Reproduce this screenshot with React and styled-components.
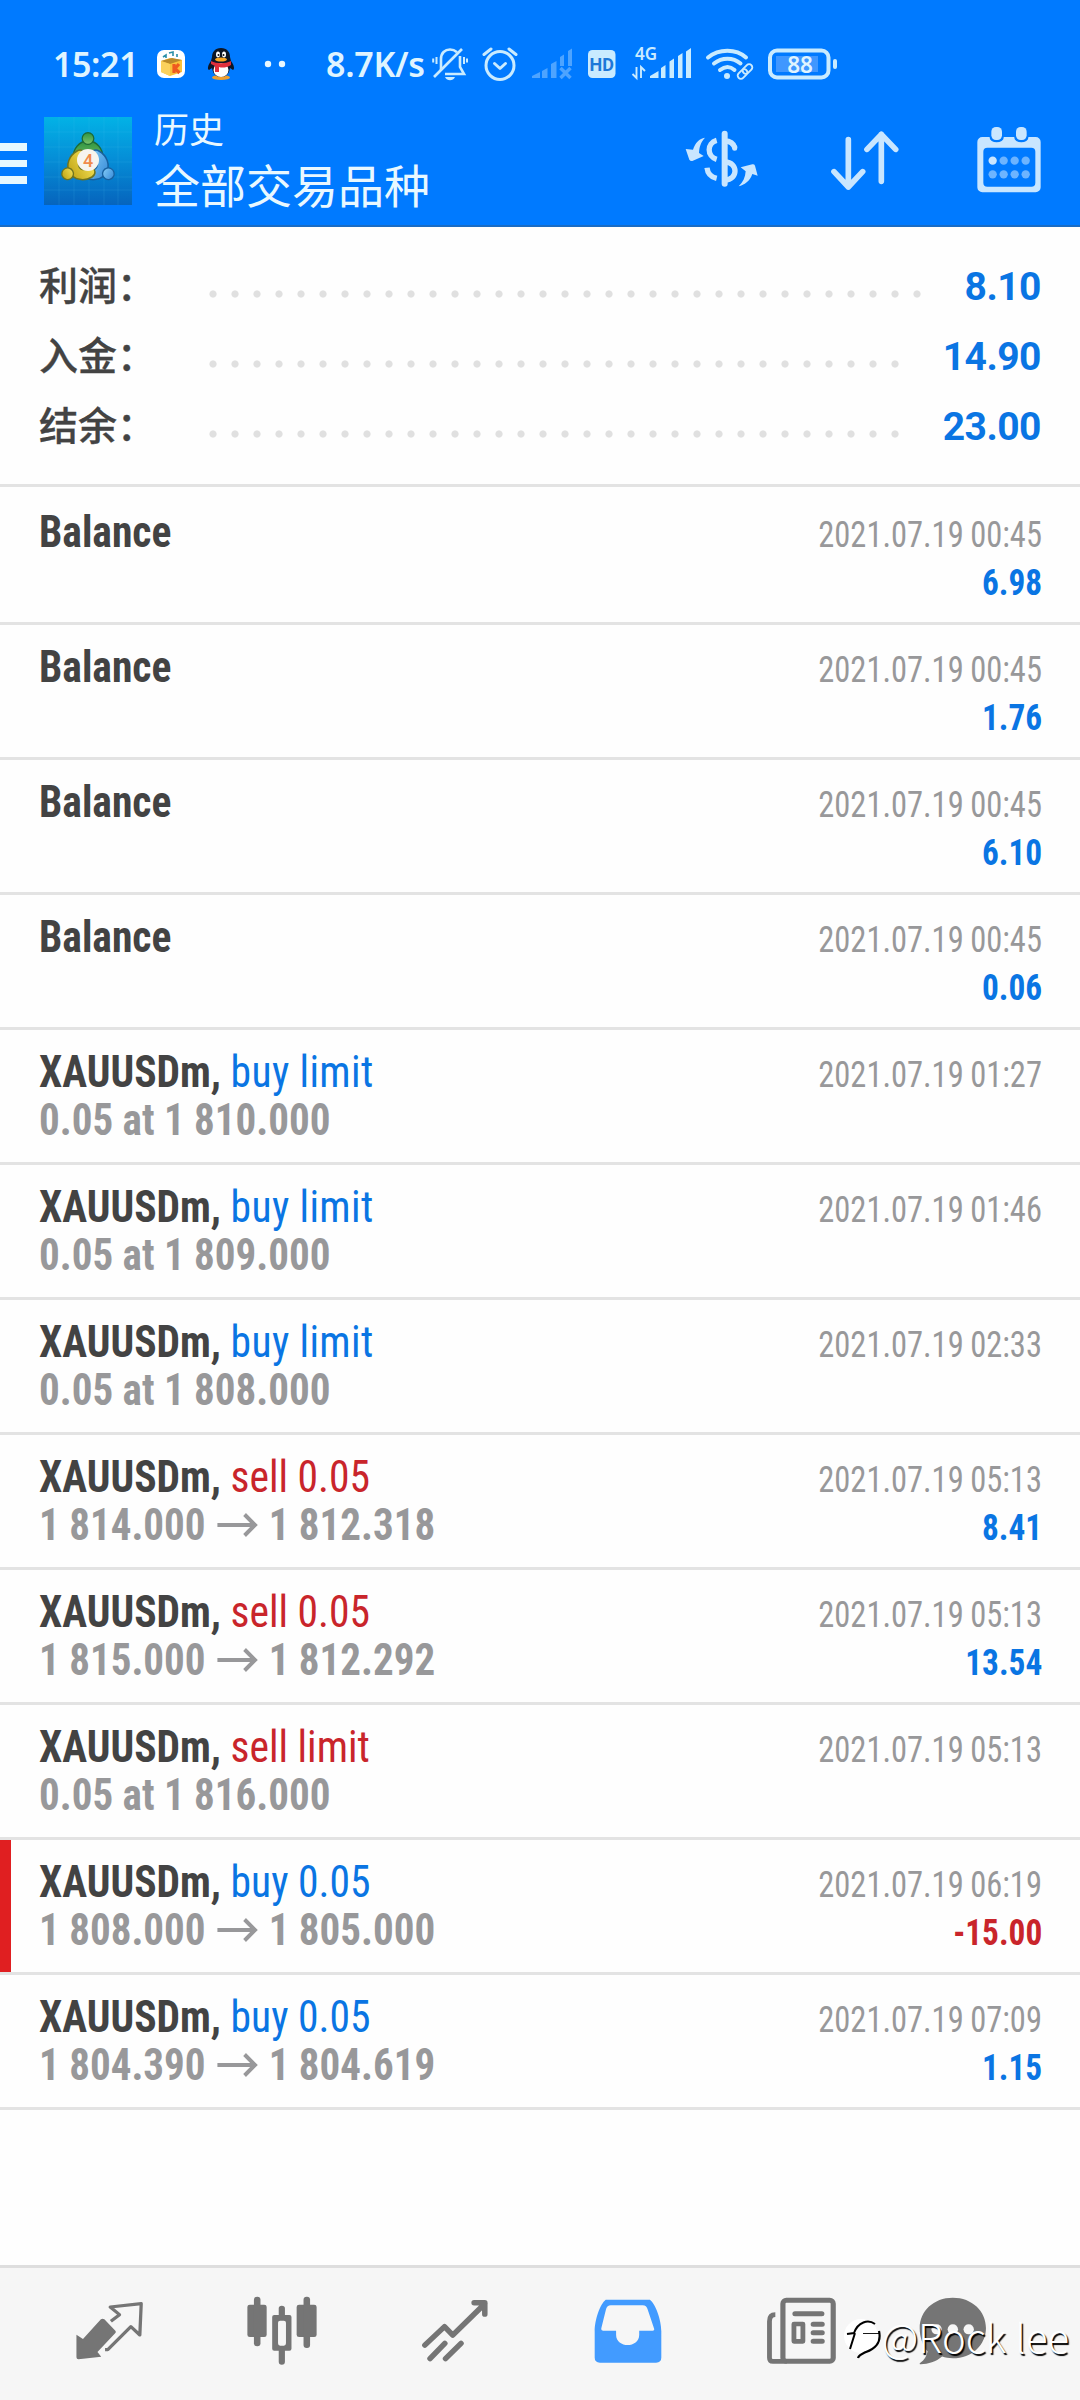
import React from "react";
import styled, { createGlobalStyle, css } from "styled-components";

const BLUE = "#007aff";
const LINK = "#0a75e3";
const RED = "#c9252b";
const INK = "#434343";
const GREY = "#98989a";
const ICE = "#c9ebff";

const GlobalStyle = createGlobalStyle`
  * { box-sizing: border-box; }
  body { margin: 0; background: #fff; }
`;

const condensed = css`
  font-family: Roboto, "Liberation Sans", sans-serif;
  font-stretch: 75%;
  white-space: pre;
`;

const Screen = styled.div`
  width: 1080px;
  height: 2400px;
  display: flex;
  flex-direction: column;
  overflow: hidden;
  background: #fefefe;
  font-family: Roboto, "Noto Sans CJK SC", sans-serif;
`;

/* ---------- header ---------- */

const Header = styled.header`
  height: 227px;
  flex: none;
  background: ${BLUE};
  border-bottom: 2px solid #1a6cc4;
`;

const StatusBar = styled.div`
  height: 100px;
  padding: 40px 0 0 53px;
  display: flex;
  align-items: flex-start;
`;

const StatusText = styled.span`
  flex: none;
  width: ${(p) => p.$w}px;
  margin-left: ${(p) => p.$gap || 0}px;
  font: 600 34px/48px "Noto Sans", sans-serif;
  letter-spacing: ${(p) => p.$track}px;
  color: #dff4ff;
  white-space: nowrap;
`;

const StatusIcon = styled.svg`
  flex: none;
  display: block;
  margin-left: ${(p) => p.$gap}px;
  overflow: visible;
`;

const Toolbar = styled.div`
  height: 125px;
  display: flex;
  align-items: flex-start;
`;

const MenuButton = styled.div`
  width: 27px;
  margin-top: 43px;
  display: flex;
  flex-direction: column;
  gap: 9px;
`;

const MenuBar = styled.i`
  height: 7.5px;
  background: #e6f8ff;
`;

const AppLogo = styled.svg`
  display: block;
  margin: 17px 0 0 17px;
`;

const Titles = styled.div`
  width: 520px;
  margin-left: 22px;
  display: flex;
  flex-direction: column;
  font-family: "Noto Sans CJK SC", sans-serif;
  font-weight: 400;
  color: #e9f8ff;
`;

const Title = styled.div`
  font-size: 35px;
  line-height: 56px;
  margin-top: 0;
`;

const Subtitle = styled.div`
  font-size: 46px;
  line-height: 56px;
  margin-top: -1px;
`;

const ToolIcon = styled.svg`
  display: block;
  flex: none;
  margin-top: 25px;
  margin-left: ${(p) => p.$gap}px;
`;

/* ---------- summary ---------- */

const Summary = styled.section`
  flex: none;
  height: 260px;
  padding: 23px 39px 0 39px;
  border-bottom: 3px solid #e3e3e3;
`;

const SummaryRow = styled.div`
  height: 70px;
  display: flex;
  align-items: center;
`;

const SummaryLabel = styled.span`
  width: 169px;
  flex: none;
  margin-top: -4px;
  font: 500 39px/70px "Noto Sans CJK SC", sans-serif;
  -webkit-text-stroke: 0.3px ${INK};
  color: ${INK};
  white-space: nowrap;
`;

const Leader = styled.span`
  flex: none;
  width: ${(p) => p.$dots * 22}px;
  height: 10px;
  margin: 17px auto 0 -6px;
  background: radial-gradient(circle at 11px 5px, #e0e0e0 3.2px, transparent 4px) 0 0 / 22px 10px repeat-x;
`;

const SummaryValue = styled.span`
  margin-top: 3px;
  font: 700 39px/70px Roboto, sans-serif;
  letter-spacing: -0.5px;
  color: ${LINK};
`;

/* ---------- deals ---------- */

const List = styled.main`
  flex: 1;
  padding-top: 3px;
`;

const Deal = styled.article`
  height: 135px;
  display: flex;
  justify-content: space-between;
  padding: 15px 38px 0 39px;
  border-bottom: 3px solid #e3e3e3;
  background: ${(p) => (p.$loss ? "linear-gradient(#e01f21, #e01f21) 0 0 / 11px 100% no-repeat" : "none")};
`;

const Side = styled.div`
  display: flex;
  flex-direction: column;
  align-items: ${(p) => (p.$end ? "flex-end" : "flex-start")};
`;

const Line = styled.div`
  ${condensed}
  height: 48px;
  line-height: 56px;
  font-size: 43.5px;
  font-weight: 700;
  color: ${(p) => (p.$dim ? GREY : INK)};
  display: flex;
  transform: scaleX(${(p) => (p.$dim ? 0.943 : 0.955)});
  transform-origin: left;
`;

const Kind = styled.span`
  font-weight: 400;
  letter-spacing: ${(p) => (p.$limit ? 0.4 : 0)}px;
  color: ${(p) => (p.$sell ? RED : LINK)};
`;

const Time = styled.div`
  ${condensed}
  height: 48px;
  line-height: 60px;
  font-size: 36px;
  word-spacing: -1px;
  color: ${GREY};
  transform: scaleX(0.902);
  transform-origin: right;
`;

const Profit = styled.div`
  ${condensed}
  height: 48px;
  line-height: 60px;
  font-size: 36px;
  font-weight: 700;
  color: ${(p) => (p.$loss ? RED : LINK)};
  transform: scaleX(0.925);
  transform-origin: right;
`;

const Arrow = styled.svg`
  display: block;
  margin: 14px 11px 0 12px;
`;

/* ---------- bottom navigation ---------- */

const NavBar = styled.nav`
  flex: none;
  position: relative;
  height: 135px;
  padding-left: 22px;
  display: flex;
  border-top: 3px solid #dedede;
  background: #f6f6f6;
`;

const NavItem = styled.div`
  width: ${(p) => p.$w || 173}px;
  height: 126px;
  display: flex;
  justify-content: center;
  align-items: center;
`;

const Watermark = styled.div`
  position: absolute;
  right: 11px;
  top: 38px;
  display: flex;
  align-items: center;
  font: 300 40px/60px "Noto Sans CJK SC", sans-serif;
  color: #fff;
  text-shadow: 1.5px 1.5px 1px #000;
  white-space: nowrap;
`;

const deals = [
  { time: "00:45", profit: "6.98" },
  { time: "00:45", profit: "1.76" },
  { time: "00:45", profit: "6.10" },
  { time: "00:45", profit: "0.06" },
  { kind: "buy limit", at: "1 810.000", time: "01:27" },
  { kind: "buy limit", at: "1 809.000", time: "01:46" },
  { kind: "buy limit", at: "1 808.000", time: "02:33" },
  { kind: "sell 0.05", open: "1 814.000", close: "1 812.318", time: "05:13", profit: "8.41" },
  { kind: "sell 0.05", open: "1 815.000", close: "1 812.292", time: "05:13", profit: "13.54" },
  { kind: "sell limit", at: "1 816.000", time: "05:13" },
  { kind: "buy 0.05", open: "1 808.000", close: "1 805.000", time: "06:19", profit: "-15.00", loss: true },
  { kind: "buy 0.05", open: "1 804.390", close: "1 804.619", time: "07:09", profit: "1.15" },
];

function Status() {
  return (
    <StatusBar>
      <StatusText $w={83} $track={-0.4}>15:21</StatusText>
      {/* box app */}
      <StatusIcon $gap={20} width="30" height="48" viewBox="0 0 30 48">
        <rect x="1" y="10" width="28" height="28" rx="7" fill="#fff" />
        <path d="M5 21l9-3 12 2v12l-12 4-9-4z" fill="#f9c23c" />
        <path d="M5 21l9 3 12-4-10-2z" fill="#b98a2b" />
        <path d="M14 24v12l-9-4V21z" fill="#fbd15c" />
        <path d="M7 17l3-2v3m3-5l4-1v4m4-2v3" stroke="#2a8fa8" strokeWidth="1.6" fill="none" />
        <path d="M18 24v9M23 24l-4 4.500 4.500 4.500" stroke="#ef5a20" strokeWidth="3.200" fill="none" />
      </StatusIcon>
      {/* penguin */}
      <StatusIcon $gap={21} width="28" height="48" viewBox="0 0 28 48">
        <ellipse cx="14" cy="37.500" rx="9" ry="2.500" fill="#f0a030" />
        <path d="M14 8c-6 0-9 4-9 9l-1 4c-3 4-4 8-2 9l3-2c1 6 4 9 9 9s8-3 9-9l3 2c2-1 1-5-2-9l-1-4c0-5-3-9-9-9z" fill="#0d1626" />
        <ellipse cx="14" cy="30" rx="7.500" ry="7" fill="#fff" />
        <path d="M4 21c6 3 14 3 20 0v4c-5 3-9 3-12 2v5H8v-6l-4-2z" fill="#e0303c" />
        <ellipse cx="11" cy="14.500" rx="2" ry="3" fill="#fff" />
        <ellipse cx="17" cy="14.500" rx="2" ry="3" fill="#fff" />
        <circle cx="11.500" cy="15" r="1" fill="#111" />
        <circle cx="16.500" cy="15" r="1" fill="#111" />
        <ellipse cx="14" cy="19.500" rx="6" ry="2" fill="#f6a623" />
      </StatusIcon>
      <StatusIcon $gap={28} width="24" height="48" viewBox="0 0 24 48" fill="#e9f8ff">
        <circle cx="5" cy="24" r="3.200" />
        <circle cx="19" cy="24" r="3.200" />
      </StatusIcon>
      <StatusText $gap={39} $w={105} $track={-0.3}>8.7K/s</StatusText>
      {/* muted bell */}
      <StatusIcon $gap={1} width="36" height="48" viewBox="0 0 36 48" fill="none" stroke={ICE} strokeWidth="2.600">
        <path d="M9 30V19c0-6 4-9.500 9-9.500 3 0 5 1 7 2.800M28 16v11l4 7H13" />
        <path d="M2 37L30 9" />
        <path d="M4.500 17v7M1.200 18.500v4M32 17v7M35 18.500v4" strokeWidth="2" />
        <path d="M13 37h10c-1 2.500-3 3.200-5 3.200s-4-.7-5-3.200z" fill={ICE} stroke="none" />
      </StatusIcon>
      {/* alarm */}
      <StatusIcon $gap={14} width="36" height="48" viewBox="0 0 36 48" fill="none" stroke={ICE} strokeWidth="3" strokeLinecap="round">
        <circle cx="18" cy="25.500" r="14" />
        <path d="M12.500 23.500l5.500 5 5.500-5" strokeLinejoin="round" />
        <path d="M2 14.500l7-5.500M34 14.500l-7-5.500" />
      </StatusIcon>
      {/* empty SIM signal */}
      <StatusIcon $gap={13} width="42" height="48" viewBox="0 0 42 48" fill="#4ea4ff">
        <path d="M1 38v-2l8-4v6zM11 31l5.500-3v10H11zM20 24l5.500-3v17H20zM29 17l4-2.500V26h-4zM37 11l4-2.500V26h-4z" />
        <path d="M29.500 28l10 10M39.500 28l-10 10" stroke="#4ea4ff" strokeWidth="3.500" />
      </StatusIcon>
      {/* HD */}
      <StatusIcon $gap={14} width="29" height="48" viewBox="0 0 29 48">
        <rect x="1" y="10" width="27.500" height="28" rx="4.500" fill={ICE} />
        <text x="14.800" y="30.500" textAnchor="middle" fontFamily="Roboto" fontWeight="700" fontSize="18" fill="#1d78d8">HD</text>
      </StatusIcon>
      {/* 4G */}
      <StatusIcon $gap={15} width="60" height="48" viewBox="0 0 60 48">
        <text x="4" y="19.500" fontFamily="Noto Sans" fontWeight="600" fontSize="17" fill={ICE}>4G</text>
        <path d="M5.500 27v11l-4-4M10 38V27l4 4" fill="none" stroke={ICE} strokeWidth="1.900" />
        <path d="M19 38v-2l8.500-5v7zM30 28l4.500-3v13H30zM38.500 21.500l4.500-3v19.500h-4.500zM47 16l4.500-3v25H47zM55 11.500l5-3.500v30h-5z" fill={ICE} />
      </StatusIcon>
      {/* wifi with link */}
      <StatusIcon $gap={14} width="50" height="48" viewBox="0 0 50 48" fill="none" stroke={ICE} strokeLinecap="round">
        <path d="M3 17.500C14 8.500 31 8.500 41 17.500M9 23.500c8-6.500 19-6.500 26.500 0M15 30c5-4 10-4 14.500 0" strokeWidth="4" />
        <circle cx="22" cy="36" r="3" fill={ICE} stroke="none" />
        <g strokeWidth="1.900" transform="rotate(-45 40 31.500)">
          <rect x="31" y="28.300" width="11" height="6.400" rx="3.200" />
          <rect x="38" y="28.300" width="11" height="6.400" rx="3.200" />
        </g>
      </StatusIcon>
      {/* battery */}
      <StatusIcon $gap={14} width="70" height="48" viewBox="0 0 70 48">
        <rect x="1" y="10.500" width="58.500" height="27" rx="7" fill="none" stroke={ICE} strokeWidth="4" />
        <rect x="7" y="16" width="42" height="16" fill="#3f97ff" />
        <rect x="64" y="19" width="4" height="10" rx="2" fill={ICE} />
        <text x="31" y="32.500" textAnchor="middle" fontFamily="Noto Sans" fontWeight="600" fontSize="22.500" fill="#dff4ff">88</text>
      </StatusIcon>
    </StatusBar>
  );
}

function Figure({ fill, edge, turn }) {
  return (
    <g transform={`rotate(${turn} 44 44)`}>
      <path d="M44 23c-9 0-15 8-15 17 0 5 5 7 9 5 0-7 2-11 6-11s6 4 6 11c4 2 9 0 9-5 0-9-6-17-15-17z" fill={fill} stroke={edge} strokeWidth="1.500" />
      <circle cx="44" cy="20.500" r="5.800" fill={fill} stroke={edge} strokeWidth="1.300" />
    </g>
  );
}

function Logo() {
  return (
    <AppLogo width="88" height="88" viewBox="0 0 88 88">
      <defs>
        <linearGradient id="sky" x1="0" y1="0" x2="0" y2="1">
          <stop offset="0" stopColor="#02b2e6" />
          <stop offset="0.450" stopColor="#0590d8" />
          <stop offset="1" stopColor="#0664bd" />
        </linearGradient>
        <linearGradient id="leaf" x1="0" y1="0" x2="0" y2="1">
          <stop offset="0" stopColor="#2f9440" />
          <stop offset="1" stopColor="#7cc46c" />
        </linearGradient>
        <linearGradient id="gold" x1="0" y1="0" x2="0" y2="1">
          <stop offset="0" stopColor="#c4a818" />
          <stop offset="1" stopColor="#eedb50" />
        </linearGradient>
        <linearGradient id="water" x1="0" y1="0" x2="0" y2="1">
          <stop offset="0" stopColor="#3f92dc" />
          <stop offset="1" stopColor="#7ac4f4" />
        </linearGradient>
      </defs>
      <rect width="88" height="88" fill="url(#sky)" />
      <path d="M0 15h88M0 30h88M0 45h88M0 60h88M0 73h88M15 0v88M30 0v88M45 0v88M60 0v88M74 0v88" stroke="#5cc4f5" strokeOpacity=".14" />
      <g transform="translate(0 1)">
        <Figure fill="url(#leaf)" edge="#1d6a35" turn={0} />
        <Figure fill="url(#water)" edge="#17609f" turn={120} />
        <Figure fill="url(#gold)" edge="#6e7420" turn={240} />
        <circle cx="44" cy="42" r="11" fill="#f6f4ee" />
        <text x="44" y="48.500" textAnchor="middle" fontFamily="Roboto" fontWeight="500" fontSize="18" fill="#f08a4a">4</text>
      </g>
    </AppLogo>
  );
}

function Tools() {
  const c = "#c9e6ff";
  return (
    <>
      {/* currency exchange */}
      <ToolIcon $gap={9} width="80" height="70" viewBox="130 285 240 210">
        <path d="M196 323c-17 3-29 14-36 36l-22-2 11 32q3 5 9 4l34-15-14-9c1-18 5-32 18-46z" fill={c} />
        <path d="M297 469c17-4 34-16 41-37l16 5-8-30q-2-5-8-4l-35 9 15 12c-1 18-8 33-21 45z" fill={c} />
        <path d="M231 331c-30 8-30 48 0 57M202 413c2 19 12 28 29 32M255 333c16 0 27 8 31 21M256 396c40 0 40 54 0 54" fill="none" stroke={c} strokeWidth="16" />
        <path d="M285 352v3" stroke={c} strokeWidth="15" strokeLinecap="round" />
        <path d="M255 311v150" stroke={c} strokeWidth="18" strokeLinecap="round" />
      </ToolIcon>
      {/* sort */}
      <ToolIcon $gap={65} width="75" height="70" viewBox="565 285 225 210" fill="none" stroke={c} strokeWidth="17" strokeLinecap="round" strokeLinejoin="round">
        <path d="M626 329v142M583 425l43 46 43-46M725 454V313M682 358l43-45 43 45" />
      </ToolIcon>
      {/* calendar */}
      <ToolIcon $gap={71} width="70" height="70" viewBox="1000 285 210 210">
        <path fillRule="evenodd" d="M1025 321h22v2a21 14 0 0 0 42 0v-2h32v2a21 14 0 0 0 42 0v-2h22a15 15 0 0 1 15 15v136a15 15 0 0 1-15 15h-160a15 15 0 0 1-15-15v-136a15 15 0 0 1 15-15zM1040 353a12 12 0 0 0-12 12v93a12 12 0 0 0 12 12h132a12 12 0 0 0 12-12v-93a12 12 0 0 0-12-12z" fill={c} />
        <rect x="1052" y="291" width="32" height="39" rx="14" fill={c} />
        <rect x="1126" y="291" width="32" height="39" rx="14" fill={c} />
        {[0, 1, 2, 3, 4, 5, 6, 7].map((i) => (
          <circle key={i} cx={1056 + (i % 4) * 33} cy={i < 4 ? 392 : 433} r="12.500" fill={i === 0 ? "#c9e6ff" : "#6db4ff"} />
        ))}
      </ToolIcon>
    </>
  );
}

function DealRow({ kind, at, open, close, time, profit, loss }) {
  return (
    <Deal $loss={loss}>
      <Side>
        <Line>
          {kind ? "XAUUSDm, " : "Balance"}
          {kind && <Kind $sell={kind.startsWith("sell")} $limit={kind === "buy limit"}>{kind}</Kind>}
        </Line>
        {at && <Line $dim>{`0.05 at ${at}`}</Line>}
        {open && (
          <Line $dim>
            {open}
            <Arrow width="44" height="26" viewBox="0 0 44 26" fill="none" stroke={GREY} strokeWidth="4.200">
              <path d="M0 13h40M29 2.500L40 13 29 23.500" />
            </Arrow>
            {close}
          </Line>
        )}
      </Side>
      <Side $end>
        <Time>{`2021.07.19 ${time}`}</Time>
        {profit && <Profit $loss={loss}>{profit}</Profit>}
      </Side>
    </Deal>
  );
}

function Navigation() {
  const g = "#757575";
  return (
    <NavBar>
      <NavItem>
        <svg width="72" height="64" viewBox="210 180 209 192" preserveAspectRatio="none" fill="none" stroke={g} strokeWidth="9.500" strokeLinejoin="round">
          <path d="M220 287l19 13 52-59q5-4 10 0l32 34q3 4 0 7l-52 57 11 14-66 8q-6 0-6-6z" fill={g} stroke="none" />
          <path d="M320 247l25-20-27-23 90-10-4 94-26-25-67 69h-8" />
        </svg>
      </NavItem>
      <NavItem>
        <svg width="72" height="70" viewBox="712 172 209 210" preserveAspectRatio="none" fill={g}>
          <rect x="716" y="198" width="56" height="97" rx="7" />
          <rect x="735" y="174" width="19" height="149" rx="9" />
          <rect x="859" y="198" width="58" height="97" rx="7" />
          <rect x="879" y="174" width="19" height="154" rx="9" />
          <path fillRule="evenodd" d="M794 229h44q6 0 6 6v95q0 6-6 6h-44q-6 0-6-6v-95q0-6 6-6zM811 246q-6 0-6 6v62q0 7 6 7h11q6 0 6-7v-62q0-6-6-6z" />
          <path d="M807 232v-23q0-8 9-8t9 8v23zM807 334v35q0 9 9 9t9-9v-35z" />
        </svg>
      </NavItem>
      <NavItem>
        <svg width="72" height="66" viewBox="1214 176 209 196" preserveAspectRatio="none" fill="none" stroke={g} strokeWidth="16" strokeLinecap="round" strokeLinejoin="round">
          <path d="M1231 316l57-55 24 25 93-93M1374 190h31v34M1246 356l43-45M1291 356l45-45" />
        </svg>
      </NavItem>
      <NavItem>
        <svg width="68" height="64" viewBox="156 180 197 186" preserveAspectRatio="none">
          <path fillRule="evenodd" d="M190 182h128c16 12 33 58 33 92v76q0 15-15 15H173q-15 0-15-15v-76c0-34 16-80 32-92zM205 198c-8 0-12 4-14 11l-14 57q-1 6 5 6h38v12c0 40 67 40 67 0v-12h39q6 0 4-6l-19-57c-2-7-6-11-14-11z" fill="#429bff" />
        </svg>
      </NavItem>
      <NavItem>
        <svg width="72" height="68" viewBox="653 171 209 204" preserveAspectRatio="none" fill="none" stroke={g}>
          <rect x="705" y="181" width="146" height="183" rx="10" strokeWidth="15" />
          <path d="M683 224q-17 0-17 20v109q0 11 10 11h40" strokeWidth="14" />
          <path d="M740 221h78M793 253h26M793 278h26M793 304h26" strokeWidth="15" strokeLinecap="round" />
          <rect x="737" y="252" width="26" height="52" strokeWidth="14" strokeLinejoin="round" />
        </svg>
      </NavItem>
      <NavItem $w={132}>
        <svg width="68" height="68" viewBox="1101 172 197 202" preserveAspectRatio="none">
          <path d="M1199 174c56 0 96 40 96 90s-40 90-96 90c-12 0-22-2-31-5-18 16-40 22-62 23-4 0-4-3-1-5 12-8 18-19 21-33-14-18-23-42-23-70 0-50 40-90 96-90z" fill={g} />
          <circle cx="1152" cy="268" r="15" fill="#f6f6f6" />
          <circle cx="1199" cy="268" r="15" fill="#f6f6f6" />
          <circle cx="1245" cy="268" r="15" fill="#f6f6f6" />
        </svg>
      </NavItem>
      <Watermark>
        <svg width="38" height="48" viewBox="0 0 38 48">
          <circle cx="17" cy="24" r="17" fill="#fff" />
          <g fill="none" stroke="#000">
            <path d="M3 22l7-1C14 10 24 7 31 12M11 21L6 37" strokeWidth="2" />
            <path d="M35 19c3 13-5 18-13 21-4 2-7 3-8 6" strokeWidth="2.200" />
            <path d="M19 21.500h16" strokeWidth=".9" />
          </g>
        </svg>
        @Rock lee
      </Watermark>
    </NavBar>
  );
}

export default function App() {
  return (
    <Screen>
      <GlobalStyle />
      <Header>
        <Status />
        <Toolbar>
          <MenuButton><MenuBar /><MenuBar /><MenuBar /></MenuButton>
          <Logo />
          <Titles>
            <Title>历史</Title>
            <Subtitle>全部交易品种</Subtitle>
          </Titles>
          <Tools />
        </Toolbar>
      </Header>
      <Summary>
        <SummaryRow><SummaryLabel>利润：</SummaryLabel><Leader $dots={33} /><SummaryValue>8.10</SummaryValue></SummaryRow>
        <SummaryRow><SummaryLabel>入金：</SummaryLabel><Leader $dots={32} /><SummaryValue>14.90</SummaryValue></SummaryRow>
        <SummaryRow><SummaryLabel>结余：</SummaryLabel><Leader $dots={32} /><SummaryValue>23.00</SummaryValue></SummaryRow>
      </Summary>
      <List>
        {deals.map((d, i) => <DealRow key={i} {...d} />)}
      </List>
      <Navigation />
    </Screen>
  );
}
